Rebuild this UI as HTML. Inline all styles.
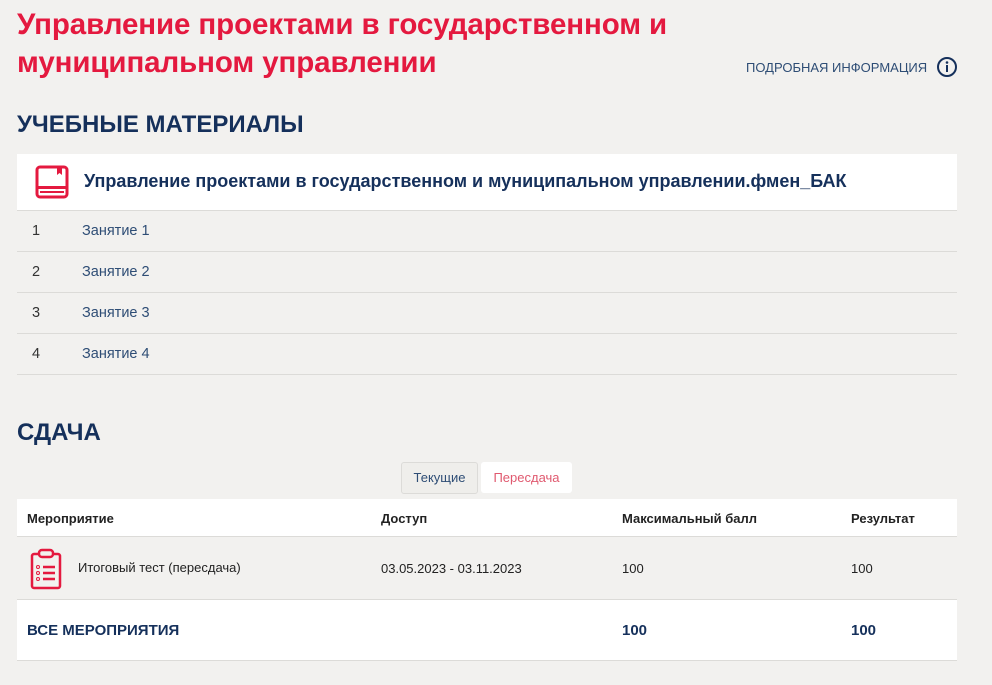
<!DOCTYPE html>
<html><head><meta charset="utf-8"><style>
body{margin:0;background:#f2f1ef;font-family:"Liberation Sans",sans-serif;width:992px;height:685px;overflow:hidden;position:relative;color:#1d2b45}
.a{position:absolute;white-space:nowrap}
h1{position:absolute;left:17px;top:6px;margin:0;font-size:29.5px;line-height:38px;color:#e4193f;font-weight:bold;letter-spacing:-0.1px}
.h2{font-size:24px;font-weight:bold;color:#15305b}
.row{position:absolute;left:17px;width:940px;height:40px;border-bottom:1px solid #dcdbd8;font-size:14.5px}
.row .n{position:absolute;left:15px;top:12px;color:#333}
.row .t{position:absolute;left:65px;top:12px;color:#2e4d75}
</style></head><body>
<h1>Управление проектами в государственном и<br>муниципальном управлении</h1>
<div class="a" style="left:746px;top:60px;font-size:13px;color:#2e4d75">ПОДРОБНАЯ ИНФОРМАЦИЯ</div>
<svg class="a" style="left:936px;top:56px" width="22" height="22" viewBox="0 0 22 22"><circle cx="11" cy="11" r="9" fill="none" stroke="#15305b" stroke-width="2"/><circle cx="11" cy="6.5" r="1.3" fill="#15305b"/><rect x="10" y="9" width="2" height="7" fill="#15305b"/></svg>
<div class="a h2" style="left:17px;top:111px">УЧЕБНЫЕ МАТЕРИАЛЫ</div>
<div class="a" style="left:17px;top:154px;width:940px;height:56px;background:#fff;border-bottom:1px solid #dcdbd8"></div>
<svg class="a" style="left:35px;top:165px" width="34" height="34" viewBox="0 0 34 34"><rect x="2" y="2" width="30" height="30" rx="3" fill="none" stroke="#e4193f" stroke-width="3"/><path d="M22 2v8l2.5-2 2.5 2V2z" fill="#e4193f"/><rect x="2" y="21" width="30" height="3" fill="#e4193f"/><rect x="5" y="26" width="24" height="2" fill="#e4193f"/></svg>
<div class="a" style="left:84px;top:171px;font-size:18px;font-weight:bold;color:#15305b">Управление проектами в государственном и муниципальном управлении.фмен_БАК</div>
<div class="row" style="top:211px"><span class="a n">1</span><span class="a t">Занятие 1</span></div>
<div class="row" style="top:252px"><span class="a n">2</span><span class="a t">Занятие 2</span></div>
<div class="row" style="top:293px"><span class="a n">3</span><span class="a t">Занятие 3</span></div>
<div class="row" style="top:334px"><span class="a n">4</span><span class="a t">Занятие 4</span></div>
<div class="a h2" style="left:17px;top:419px">СДАЧА</div>
<div class="a" style="left:401px;top:462px;width:75px;height:30px;border:1px solid #dcdbd8;border-radius:3px;background:#efeeeb;font-size:13px;line-height:30px;text-align:center;color:#2e4d75">Текущие</div>
<div class="a" style="left:481px;top:462px;width:91px;height:31px;border-radius:3px;background:#fff;font-size:13px;line-height:31px;text-align:center;color:#e0596f">Пересдача</div>
<div class="a" style="left:17px;top:499px;width:940px;height:37px;background:#fff;border-bottom:1px solid #dcdbd8;font-size:13px;font-weight:bold;color:#222">
<span class="a" style="left:10px;top:12px">Мероприятие</span><span class="a" style="left:364px;top:12px">Доступ</span><span class="a" style="left:605px;top:12px">Максимальный балл</span><span class="a" style="left:834px;top:12px">Результат</span></div>
<div class="a" style="left:17px;top:537px;width:940px;height:62px;border-bottom:1px solid #dcdbd8;font-size:13px;color:#222">
<svg class="a" style="left:12px;top:11px" width="34" height="42" viewBox="0 0 34 42"><rect x="3" y="6" width="28" height="34" rx="2" fill="none" stroke="#e4193f" stroke-width="2.5"/><rect x="10" y="2" width="14" height="7" rx="3" fill="#f2f1ef" stroke="#e4193f" stroke-width="2.5"/><circle cx="9" cy="19" r="1.5" fill="none" stroke="#e4193f"/><circle cx="9" cy="25" r="1.5" fill="none" stroke="#e4193f"/><circle cx="9" cy="31" r="1.5" fill="none" stroke="#e4193f"/><path d="M14 19h12M14 25h12M14 31h12" stroke="#e4193f" stroke-width="2.5"/></svg>
<span class="a" style="left:61px;top:23px">Итоговый тест (пересдача)</span><span class="a" style="left:364px;top:24px">03.05.2023 - 03.11.2023</span><span class="a" style="left:605px;top:24px">100</span><span class="a" style="left:834px;top:24px">100</span></div>
<div class="a" style="left:17px;top:600px;width:940px;height:60px;background:#fff;border-bottom:1px solid #dcdbd8;font-size:15px;font-weight:bold;color:#15305b">
<span class="a" style="left:10px;top:22px">ВСЕ МЕРОПРИЯТИЯ</span><span class="a" style="left:605px;top:22px">100</span><span class="a" style="left:834px;top:22px">100</span></div>
</body></html>
